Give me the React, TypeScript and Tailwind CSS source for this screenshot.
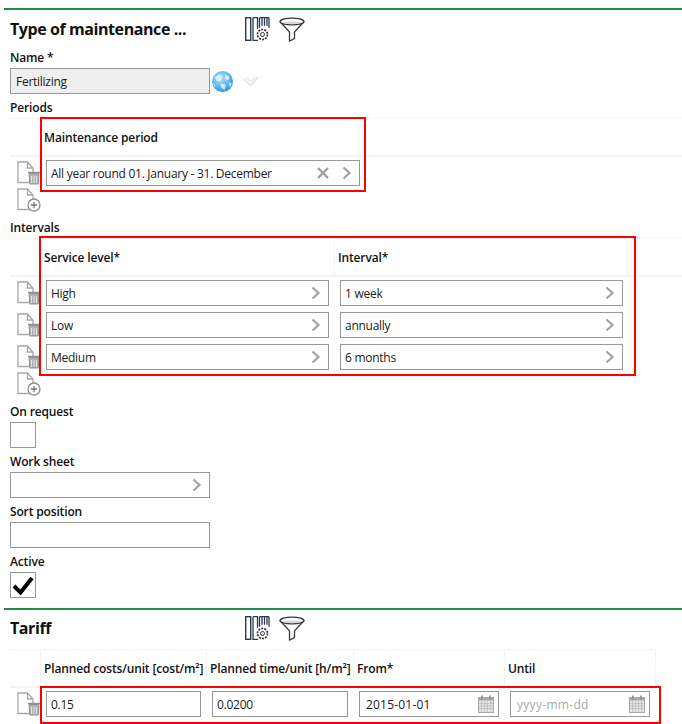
import React from "react";

const Chevron = () => (
  <svg width="10" height="14" viewBox="0 0 10 14" className="shrink-0">
    <path d="M1.500 1.500l6 5.500-6 5.500" fill="none" stroke="#a3a3a8" strokeWidth="2.300" />
  </svg>
);

const Cross = () => (
  <svg width="12" height="12" viewBox="0 0 12 12" className="shrink-0">
    <path d="M1 1l10 10M11 1L1 11" fill="none" stroke="#9b9ba0" strokeWidth="2.200" />
  </svg>
);

const Page = () => (
  <path d="M1 1h9.500l5.500 6v14.500h-15z M10.500 1v6h5.500" fill="#fff" stroke="#aca8a4" strokeWidth="1.300" />
);

const TrashDoc = () => (
  <svg width="24" height="24" viewBox="0 0 24 24" className="shrink-0">
    <Page />
    <path d="M11 11.500h12" stroke="#8e9294" strokeWidth="1.500" />
    <path d="M12 12.500h10l-.8 10.500h-8.400z" fill="#aeb2b3" stroke="#8e9294" strokeWidth="1" />
    <path d="M14.500 15v7M17 15v7M19.500 15v7" stroke="#e8e8e8" strokeWidth="0.900" />
  </svg>
);

const AddDoc = () => (
  <svg width="24" height="24" viewBox="0 0 24 24" className="shrink-0">
    <Page />
    <circle cx="17" cy="17" r="6" fill="#fff" stroke="#8f9191" strokeWidth="1.300" />
    <path d="M13.800 17h6.400M17 13.800v6.400" stroke="#777" strokeWidth="1.300" />
  </svg>
);

const ColumnsIcon = () => (
  <svg width="25" height="25" viewBox="0 0 25 25" className="shrink-0">
    <rect x="0.700" y="0.700" width="5" height="22.600" fill="#fff" stroke="#2c3a4c" strokeWidth="1.400" />
    <path d="M8 0.700v22.600h5M8 0.700h4.500v11M14.500 0.700v10M17 0.700v8M19.500 0.700v8M22 0.700v8M24 0.700v10M14.500 0.700h9.500" stroke="#2c3a4c" strokeWidth="1.300" fill="none" />
    <circle cx="17.500" cy="17.500" r="5" fill="#fff" stroke="#333" strokeWidth="1.700" strokeDasharray="2 1.100" />
    <circle cx="17.500" cy="17.500" r="2" fill="#fff" stroke="#333" strokeWidth="1" />
  </svg>
);

const FunnelIcon = () => (
  <svg width="26" height="25" viewBox="0 0 26 25" className="shrink-0">
    <path d="M1 4.500l9.500 10.500v9l5-2.500V15l9.500-10.500" fill="#fff" stroke="#3a3a3a" strokeWidth="1.300" />
    <ellipse cx="13" cy="4.500" rx="12" ry="3.400" fill="#fff" stroke="#333" strokeWidth="1.300" />
    <path d="M3 5.500c4 2.200 16 2.200 20 0c-4-1.500-16-1.500-20 0z" fill="#d8d8d8" />
  </svg>
);

const Globe = () => (
  <svg width="21" height="21" viewBox="0 0 20 20" className="shrink-0">
    <defs>
      <radialGradient id="g" cx="0.4" cy="0.35" r="0.75">
        <stop offset="0" stopColor="#b6e2fb" />
        <stop offset="0.6" stopColor="#55b5f2" />
        <stop offset="1" stopColor="#1583e2" />
      </radialGradient>
    </defs>
    <circle cx="10" cy="10" r="10" fill="url(#g)" />
    <path d="M3 6l4-3 3 2-2 5-4-1zM13 3l4 3-2 3-3-2zM8 12l5 1-1 5-3-2zM16 11l3 1-2 4zM1 12l2 1v3z" fill="#eef8ff" opacity="0.8" />
  </svg>
);

const FadedCheck = () => (
  <svg width="16" height="12" viewBox="0 0 16 12" className="shrink-0">
    <path d="M1 4l6.500 6.500L15 2" fill="none" stroke="#e0e0e0" strokeWidth="1.500" />
    <path d="M3 2l4.500 4.500L12 2.500" fill="none" stroke="#e6e6e6" strokeWidth="1.500" />
  </svg>
);

const Calendar = () => (
  <svg width="16" height="18" viewBox="0 0 16 18" className="-mr-[3px] shrink-0">
    <rect x="0.500" y="2.500" width="15" height="15" fill="#e4e4e4" stroke="#a8a8a8" />
    <rect x="0.500" y="2.500" width="15" height="3" fill="#a8a8a8" />
    <path d="M4 0.500v4M12 0.500v4" stroke="#8c8c8c" strokeWidth="1.600" />
    <path d="M1 8.500h14M1 11h14M1 13.500h14M3.500 6v11M6.500 6v11M9.500 6v11M12.500 6v11" stroke="#bcbcbc" strokeWidth="0.800" />
  </svg>
);

const Label = ({ children }: { children: React.ReactNode }) => (
  <div className="flex h-[20px] items-center text-[12px] font-semibold tracking-[-0.15px] text-[#111]">{children}</div>
);

const Field = ({
  children,
  className,
}: {
  children?: React.ReactNode;
  className: string;
}) => (
  <div className={`flex h-[26px] items-center border border-[#999] pl-[4px] pr-[7px] text-[12px] tracking-[-0.27px] text-[#1a1a1a] ${className}`}>
    {children}
  </div>
);

const Txt = ({ children, className = "" }: { children: React.ReactNode; className?: string }) => (
  <span className={`flex-1 pt-[2px] ${className}`}>{children}</span>
);

const Pick = ({ text, className }: { text: string; className: string }) => (
  <Field className={className}>
    <Txt>{text}</Txt>
    <Chevron />
  </Field>
);

const SectionHead = ({ title, className }: { title: string; className: string }) => (
  <div className={`flex items-center pl-[6px] ${className}`}>
    <div className="w-[235px] text-[16px] font-bold tracking-[-0.42px] text-[#111]">{title}</div>
    <div className="flex items-center gap-[9px]">
      <ColumnsIcon />
      <FunnelIcon />
    </div>
  </div>
);

const Frame = ({ className }: { className: string }) => (
  <div className={`pointer-events-none absolute border-2 border-[#f00] ${className}`} />
);

const HeadCell = ({ text, className }: { text: React.ReactNode; className: string }) => (
  <div className={`flex h-[36px] items-center whitespace-nowrap border-r border-[#f3f3f3] pl-[3px] pt-[2px] text-[12px] font-semibold tracking-[-0.15px] text-[#111] ${className}`}>
    {text}
  </div>
);

const RowIcon = () => (
  <div className="flex w-[36px] pl-[7px]">
    <TrashDoc />
  </div>
);

const IntervalRow = ({ a, b }: { a: string; b: string }) => (
  <div className="flex h-[32px] items-center">
    <RowIcon />
    <Pick text={a} className="w-[283px]" />
    <Pick text={b} className="ml-[11px] w-[283px]" />
  </div>
);

const AddRow = () => (
  <div className="flex h-[22px] items-center pl-[7px]">
    <AddDoc />
  </div>
);

export default function App() {
  return (
    <div className="h-[724px] w-[682px] overflow-hidden bg-white pt-2 pl-[4px] font-['Open_Sans','Noto_Sans',sans-serif]">
      <div className="border-t-2 border-[#1f8a4c]">
        <SectionHead title="Type of maintenance ..." className="h-[38px]" />
        <div className="pl-[6px]">
          <Label>Name *</Label>
          <div className="flex items-center">
            <Field className="w-[200px] bg-[#efefef] pl-[5px]">
              <Txt>Fertilizing</Txt>
            </Field>
            <div className="ml-[2px] flex">
              <Globe />
            </div>
            <div className="ml-[10px] flex">
              <FadedCheck />
            </div>
          </div>
          <div className="mt-[4px]">
            <Label>Periods</Label>
          </div>

          <div className="relative">
            <div className="border-t border-[#f3f3f3]" />
            <div className="flex border-b-2 border-[#f3f3f3]">
              <div className="w-[30px]" />
              <HeadCell text="Maintenance period" className="w-[325px] border-l border-l-[#f3f3f3]" />
            </div>
            <div className="flex h-[32px] items-center">
              <RowIcon />
              <Field className="w-[314px]">
                <Txt>All year round 01. January - 31. December</Txt>
                <Cross />
                <div className="ml-[13px] flex">
                  <Chevron />
                </div>
              </Field>
            </div>
            <Frame className="left-[30px] top-[-1px] h-[75px] w-[326px]" />
          </div>
          <AddRow />

          <div className="mt-[7px]">
            <Label>Intervals</Label>
          </div>
          <div className="relative">
            <div className="border-t border-[#f3f3f3]" />
            <div className="flex border-b-2 border-[#f3f3f3]">
              <div className="w-[30px]" />
              <HeadCell text="Service level*" className="w-[295px] border-l border-l-[#f3f3f3]" />
              <HeadCell text="Interval*" className="w-[293px]" />
            </div>
            <IntervalRow a="High" b="1 week" />
            <IntervalRow a="Low" b="annually" />
            <IntervalRow a="Medium" b="6 months" />
            <Frame className="left-[29px] top-[-2px] h-[140px] w-[597px]" />
          </div>
          <AddRow />

          <div className="mt-[7px]">
            <Label>On request</Label>
          </div>
          <div className="h-[26px] w-[26px] border border-[#999]" />
          <div className="mt-[4px]">
            <Label>Work sheet</Label>
          </div>
          <Field className="w-[200px] justify-end">
            <Chevron />
          </Field>
          <div className="mt-[4px]">
            <Label>Sort position</Label>
          </div>
          <Field className="w-[200px]" />
          <div className="mt-[4px]">
            <Label>Active</Label>
          </div>
          <div className="flex h-[26px] w-[26px] items-center justify-center border border-[#999]">
            <svg width="22" height="20" viewBox="0 0 22 20">
              <path d="M2 11l6.500 6.500L20 3" fill="none" stroke="#000" strokeWidth="4" />
            </svg>
          </div>
        </div>
      </div>

      <div className="mt-[10px] border-t-2 border-[#1f8a4c]">
        <SectionHead title="Tariff" className="h-[39px] pb-[3px]" />
        <div className="relative ml-[6px]">
          <div className="w-[646px] border-t border-[#f3f3f3]" />
          <div className="flex w-[646px] border-b-2 border-[#f3f3f3]">
            <div className="w-[30px]" />
            <HeadCell text="Planned costs/unit [cost/m²]" className="w-[167px] border-l border-l-[#f3f3f3]" />
            <HeadCell text="Planned time/unit [h/m²]" className="w-[147px]" />
            <HeadCell text="From*" className="w-[151px]" />
            <HeadCell text="Until" className="w-[151px]" />
          </div>
          <div className="flex h-[32px] items-center">
            <RowIcon />
            <Field className="w-[155px]">
              <Txt>0.15</Txt>
            </Field>
            <Field className="ml-[11px] w-[136px]">
              <Txt>0.0200</Txt>
            </Field>
            <Field className="ml-[11px] w-[140px] pl-[6px]">
              <Txt className="tracking-[0.2px]">2015-01-01</Txt>
              <Calendar />
            </Field>
            <Field className="ml-[11px] w-[140px] pl-[6px]">
              <Txt className="tracking-[0.3px] text-[#aaa]">yyyy-mm-dd</Txt>
              <Calendar />
            </Field>
          </div>
          <Frame className="left-[30px] top-[37px] h-[38px] w-[621px]" />
        </div>
      </div>
    </div>
  );
}
